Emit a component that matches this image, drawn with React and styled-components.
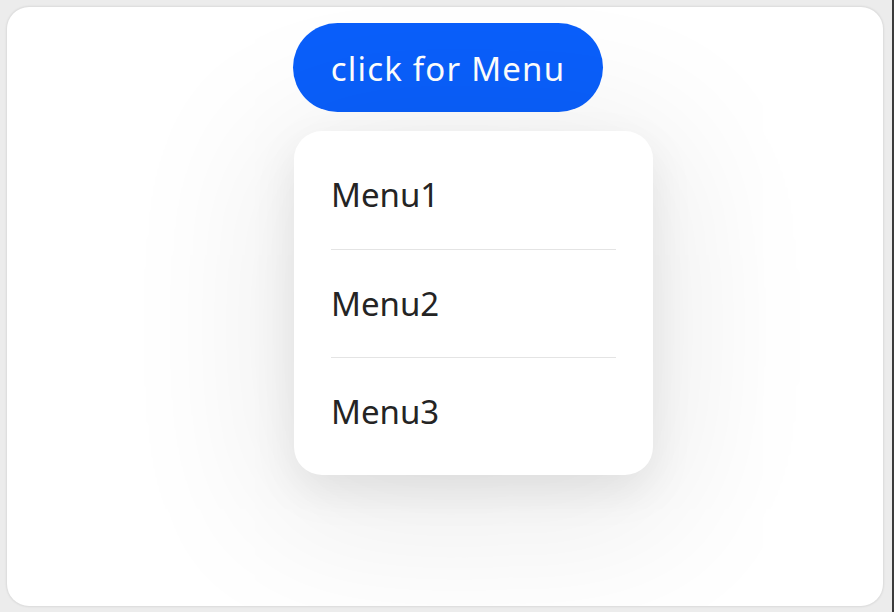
import React, { useState } from "react";
import styled, { createGlobalStyle } from "styled-components";

const GlobalStyle = createGlobalStyle`
  html, body {
    margin: 0;
    padding: 0;
    background: #efefef;
    font-family: "Noto Sans", "Open Sans", sans-serif;
  }
`;

const Frame = styled.div`
  box-sizing: border-box;
  width: 894px;
  height: 612px;
  padding: 7px 9px 6px 7px;
  background: #ececec;
  border-right: 2px solid #3c3c3c;
`;

const Card = styled.div`
  box-sizing: border-box;
  height: 100%;
  background: #ffffff;
  border-radius: 22px;
  box-shadow: 0 0 2px 1px rgba(0, 0, 0, 0.08);
  display: flex;
  flex-direction: column;
  align-items: flex-start;
  padding: 16px 0 0 286px;
  overflow: hidden;
`;

const MenuButton = styled.button`
  width: 310px;
  height: 89px;
  border: none;
  border-radius: 45px;
  background: #0a5ffb;
  color: #ffffff;
  font-family: inherit;
  font-size: 33px;
  letter-spacing: 1.2px;
  padding: 2px 0 0;
  cursor: pointer;
`;

const Menu = styled.ul`
  list-style: none;
  box-sizing: border-box;
  width: 359px;
  margin: 19px 0 0 1px;
  padding: 10px 0;
  background: #ffffff;
  border-radius: 28px;
  box-shadow: 0 16px 44px rgba(0, 0, 0, 0.08), 0 24px 150px 30px rgba(0, 0, 0, 0.08);
`;

const MenuItem = styled.li`
  height: 108px;
  margin: 0 37px;
  display: flex;
  align-items: center;
  padding-bottom: 1px;
  box-sizing: border-box;
  font-size: 33px;
  color: #242424;
  border-top: ${(props) => (props.first ? "none" : "1px solid #e4e4e4")};
  cursor: pointer;
`;

const items = ["Menu1", "Menu2", "Menu3"];

const App = () => {
  const [open, setOpen] = useState(true);

  return (
    <>
      <GlobalStyle />
      <Frame>
        <Card>
          <MenuButton onClick={() => setOpen(!open)}>click for Menu</MenuButton>
          {open && (
            <Menu>
              {items.map((item, i) => (
                <MenuItem key={item} first={i === 0}>
                  {item}
                </MenuItem>
              ))}
            </Menu>
          )}
        </Card>
      </Frame>
    </>
  );
};

export default App;
